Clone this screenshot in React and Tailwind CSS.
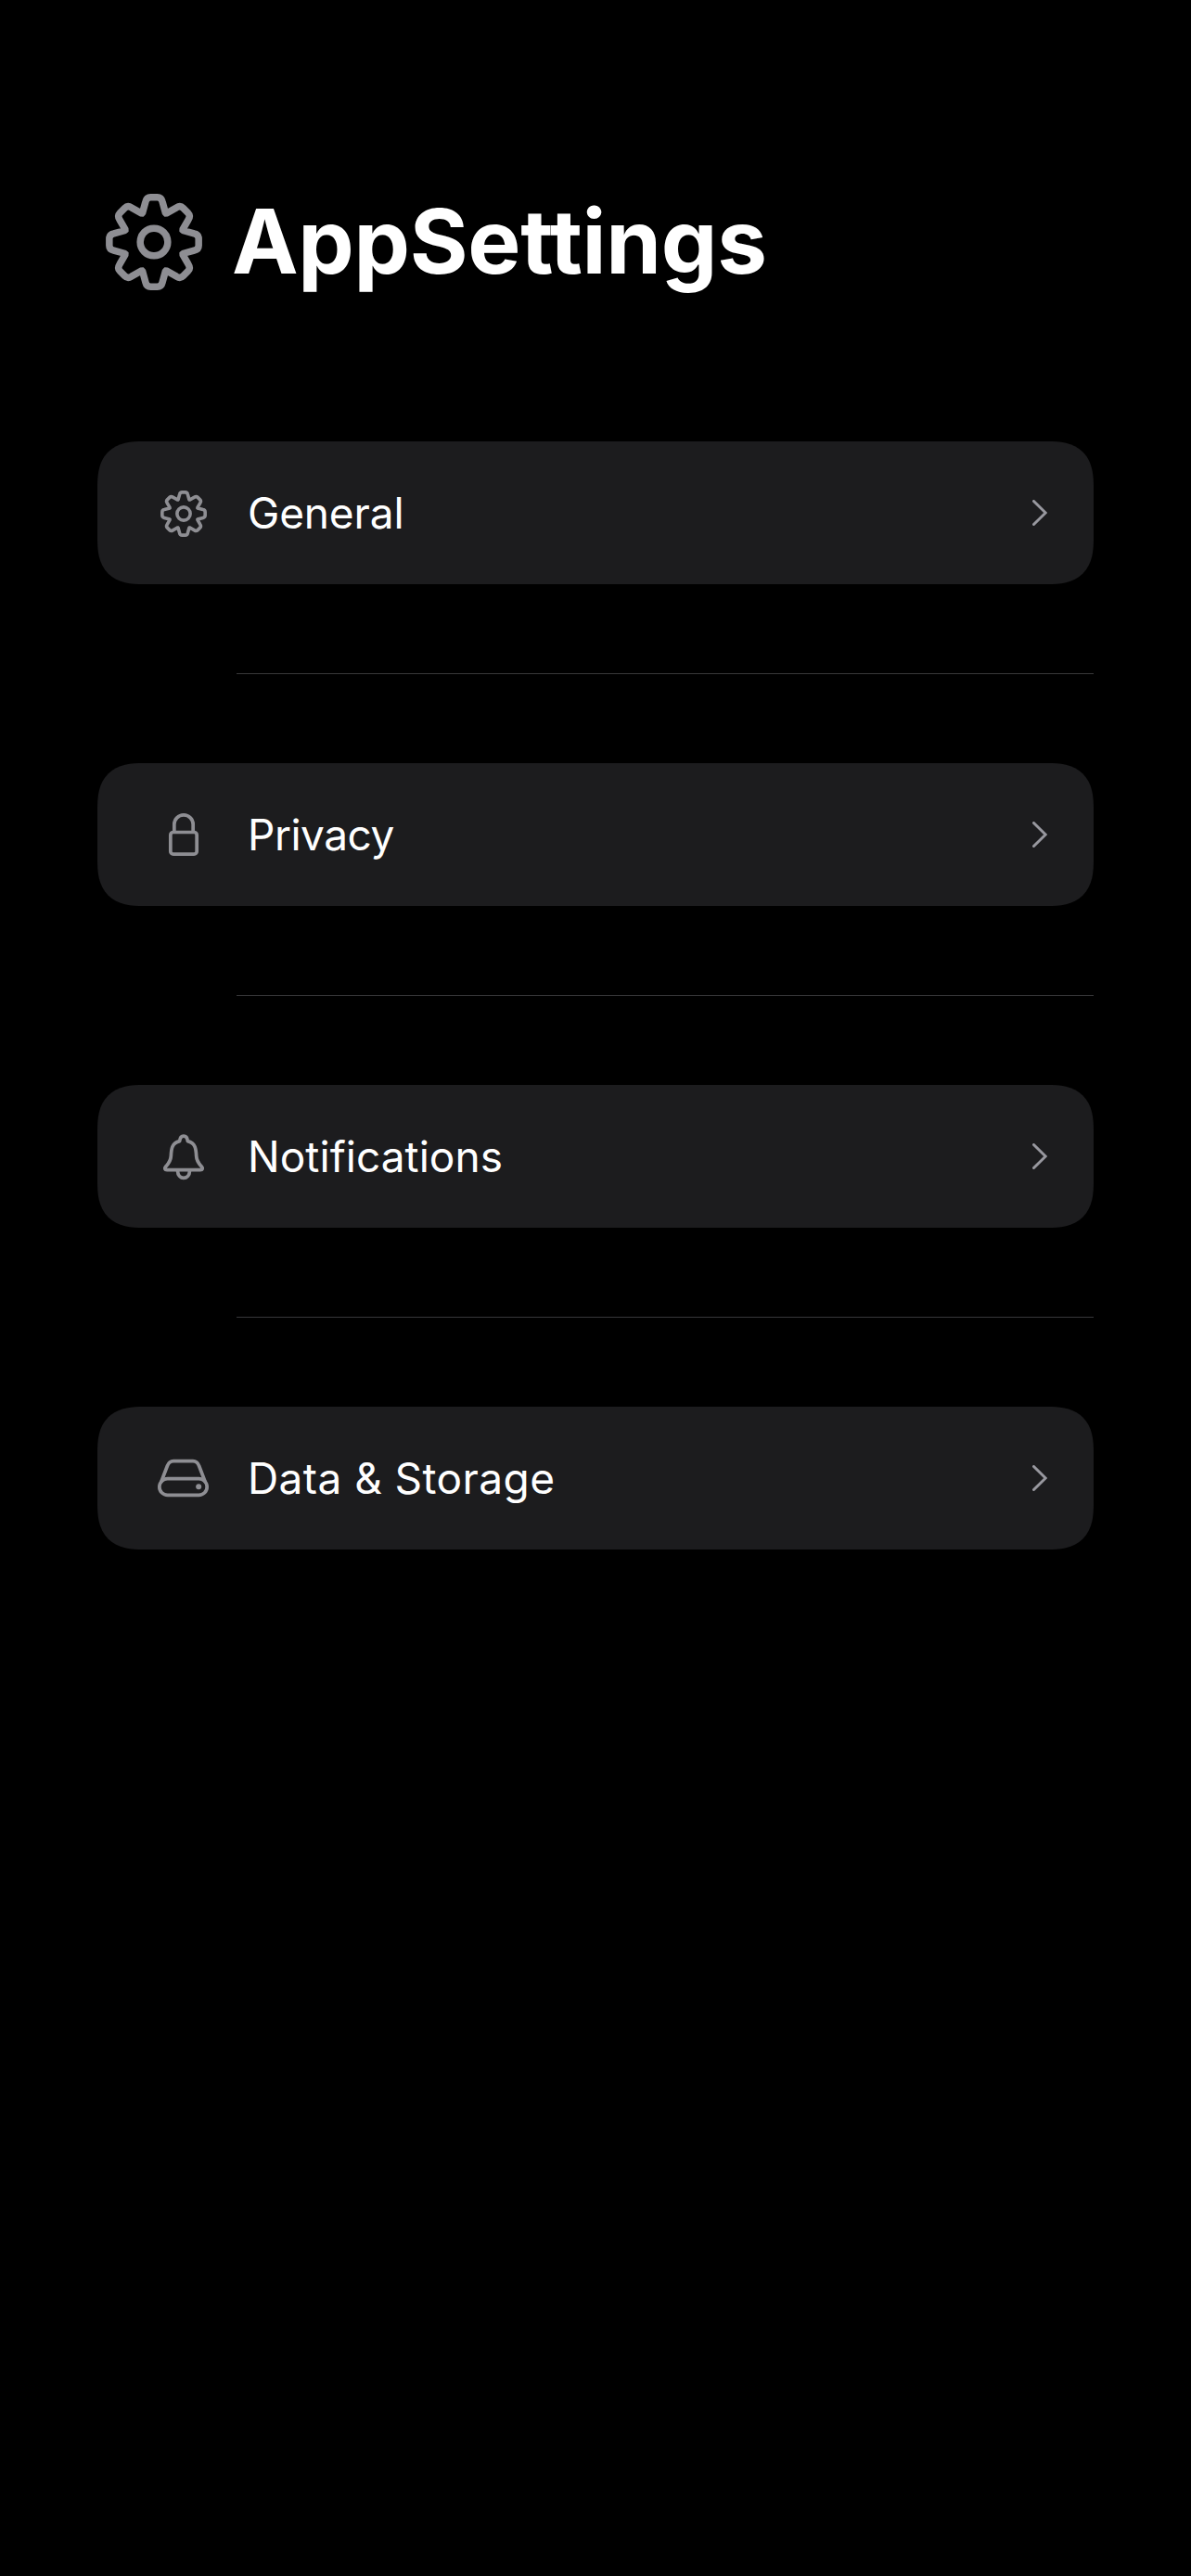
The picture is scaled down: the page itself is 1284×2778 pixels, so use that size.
import React from "react";

const TOOTH = [
  [-37.5, -93],
  [-27.4, -130],
  [-24, -144.5],
  [-11, -144.5],
  [11, -144.5],
  [24, -144.5],
  [27.4, -130],
];

// Eight teeth, each one the same outline turned by 45 degrees.
const GEAR_PATH =
  Array.from({ length: 8 }, (_, i) => {
    const a = (i * Math.PI) / 4;
    const p = TOOTH.map(([x, y]) =>
      [x * Math.cos(a) - y * Math.sin(a), x * Math.sin(a) + y * Math.cos(a)]
        .map((n) => n.toFixed(2))
        .join(" ")
    );
    const right = [37.5 * Math.cos(a) + 93 * Math.sin(a), 37.5 * Math.sin(a) - 93 * Math.cos(a)]
      .map((n) => n.toFixed(2))
      .join(" ");
    return `${i ? "L" : "M"}${p[0]}L${p[1]}Q${p[2]} ${p[3]}L${p[4]}Q${p[5]} ${p[6]}L${right}`;
  }).join("") + "Z";

function GearShape() {
  return (
    <>
      <path d={GEAR_PATH} strokeWidth="22.5" strokeLinejoin="bevel" />
      <circle r="44.5" strokeWidth="22.5" />
    </>
  );
}

function RowIcon({ viewBox, children }) {
  return (
    <svg viewBox={viewBox} className="size-[60px] shrink-0" fill="none" stroke="#8e8e93" strokeWidth="11.2">
      {children}
    </svg>
  );
}

const rows = [
  {
    label: "General",
    tracking: "tracking-[-0.15px]",
    icon: (
      <RowIcon viewBox="54 39 180 180">
        <g transform="translate(144 132) scale(.481)">
          <GearShape />
        </g>
      </RowIcon>
    ),
  },
  {
    label: "Privacy",
    tracking: "tracking-[-0.5px]",
    icon: (
      <RowIcon viewBox="54 45 180 180">
        <rect x="101.5" y="127.5" width="85" height="71" rx="9" />
        <path d="M113.5 127V102a30.5 30.5 0 0 1 61 0V127" />
      </RowIcon>
    ),
  },
  {
    label: "Notifications",
    tracking: "tracking-[0.05px]",
    icon: (
      <RowIcon viewBox="54 51 180 180">
        <path
          d="M90 185C83 185 81 180 86 174C95 164 102 158 103 140C104 116 106 98 131 92C132 81 137 75.500 144 75.500C151 75.500 156 81 157 92C182 98 184 116 185 140C186 158 193 164 202 174C207 180 205 185 198 185Z"
          strokeLinejoin="round"
        />
        <path d="M124.500 188C125 203 133 211 144 211C155 211 163 203 163.500 188" />
      </RowIcon>
    ),
  },
  {
    label: "Data & Storage",
    tracking: "tracking-[0.42px]",
    icon: (
      <RowIcon viewBox="54 42 180 180">
        <rect x="65.500" y="134" width="154" height="53" rx="26.500" />
        <path d="M71 145L91 93Q97 77 111 77H174Q188 77 194 93L214 145" />
        <circle cx="192.500" cy="160" r="9" fill="#8e8e93" stroke="none" />
      </RowIcon>
    ),
  },
];

function SettingsRow({ icon, label, tracking }) {
  return (
    <button className="flex h-[154px] w-full items-center rounded-[38px] bg-[#1c1c1e] pl-[63px] pr-[50px] text-left [corner-shape:superellipse(1.4)] supports-[corner-shape:squircle]:rounded-[50px]">
      {icon}
      <span className={`ml-[39px] flex-1 text-[46px] leading-none text-white ${tracking}`}>{label}</span>
      <svg viewBox="0 0 16 28" className="h-7 w-4" fill="none" stroke="#98989f" strokeWidth="3" strokeLinecap="round">
        <path d="M1.500 1.500L14.200 14L1.500 26.500" />
      </svg>
    </button>
  );
}

export default function App() {
  return (
    <main className="min-h-[2778px] bg-black px-[105px] pt-[201px] font-['Inter',sans-serif]">
      <header className="flex h-[120px] items-center pl-[9px]">
        <svg viewBox="-156 -156 312 312" className="size-[104px] shrink-0" fill="none" stroke="#8e8e93">
          <GearShape />
        </svg>
        <h1 className="-mt-[3px] ml-[32px] text-[96px] font-bold leading-none tracking-[-0.3px] text-white">AppSettings</h1>
      </header>
      <div className="mt-[155px]">
        {rows.map((row, i) => (
          <React.Fragment key={row.label}>
            {i > 0 && <hr className="my-24 ml-[150px] h-px border-0 bg-[#38383a]" />}
            <SettingsRow {...row} />
          </React.Fragment>
        ))}
      </div>
    </main>
  );
}
